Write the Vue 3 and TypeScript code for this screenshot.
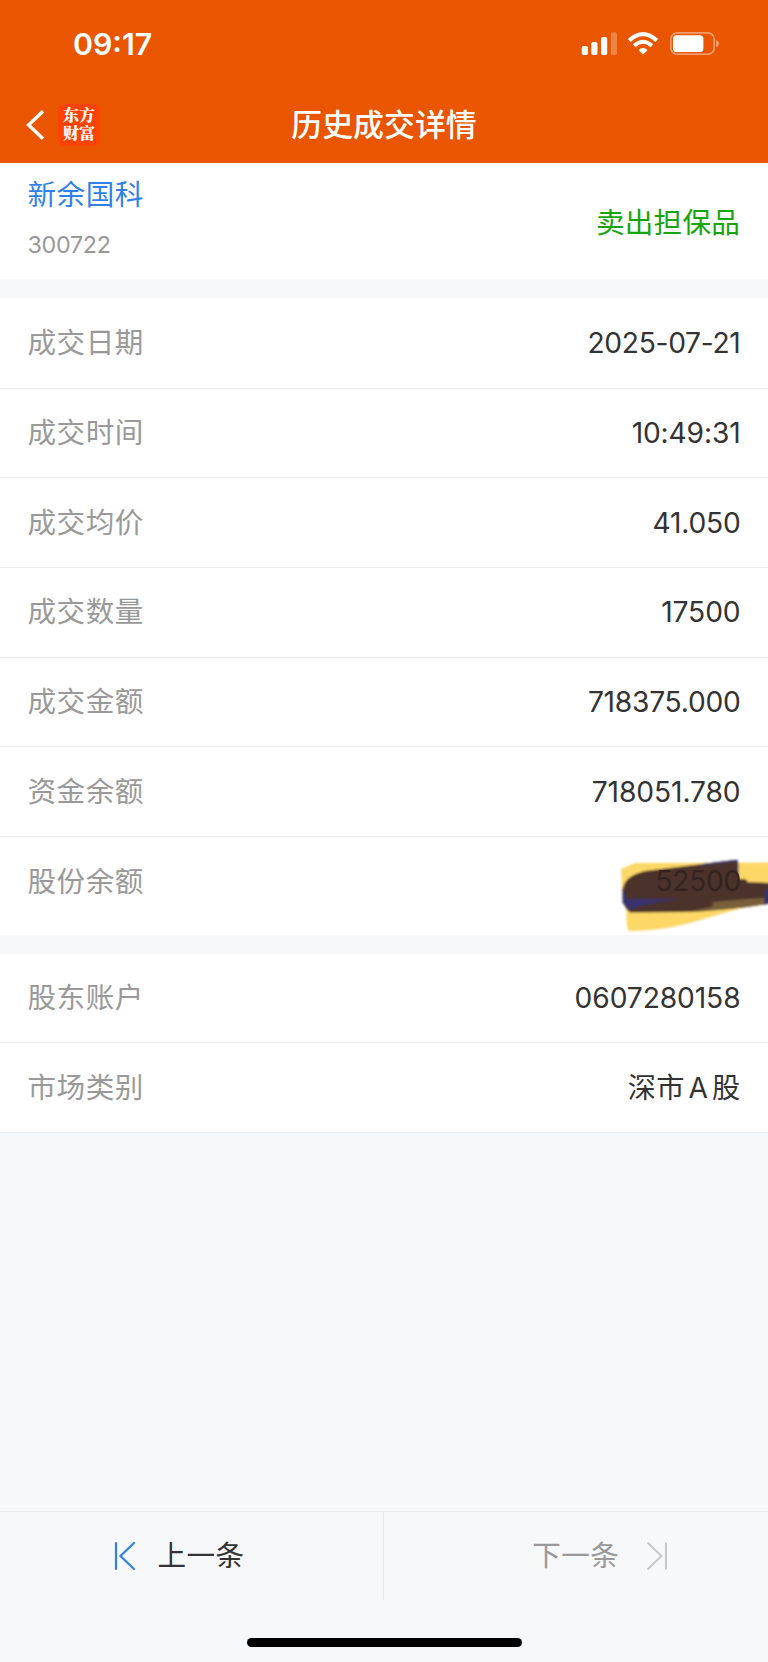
<script setup lang="ts">
interface DetailRow {
  label: string
  value: string
  spacing: number
  masked?: boolean
}

const tradeRows: DetailRow[] = [
  { label: '成交日期', value: '2025-07-21', spacing: -0.3 },
  { label: '成交时间', value: '10:49:31', spacing: -0.15 },
  { label: '成交均价', value: '41.050', spacing: -0.2 },
  { label: '成交数量', value: '17500', spacing: -0.1 },
  { label: '成交金额', value: '718375.000', spacing: -0.25 },
  { label: '资金余额', value: '718051.780', spacing: -0.1 },
  { label: '股份余额', value: '52500', spacing: -0.3, masked: true },
]

const accountRows: DetailRow[] = [
  { label: '股东账户', value: '0607280158', spacing: -0.1 },
  { label: '市场类别', value: '深市 A 股', spacing: 0.3 },
]
</script>

<template>
  <div class="screen">
    <header class="header">
      <div class="status">
        <span class="clock">09:17</span>
        <svg class="status-icons" width="140" height="26" viewBox="580 31 140 26">
          <g fill="#fff">
            <rect x="581.8" y="46" width="6.2" height="9" rx="1.8" />
            <rect x="591.3" y="42" width="6.2" height="13" rx="1.8" />
            <rect x="601" y="37" width="6.2" height="18" rx="1.8" />
            <rect x="610.8" y="32.3" width="6.2" height="22.7" rx="1.8" opacity=".27" />
            <path d="M643 54.6 L638.4 50 Q643 46 647.6 50 Z" />
          </g>
          <g fill="none" stroke="#fff" stroke-width="4">
            <path d="M629.2 40.4 Q643 27.8 656.8 40.4" />
            <path d="M634.2 45.7 Q643 37.8 651.8 45.7" />
          </g>
          <rect x="670.8" y="32.8" width="43.4" height="21.4" rx="6.5" fill="none" stroke="#fff" stroke-width="1.7" opacity=".42" />
          <rect x="673" y="35.2" width="30.4" height="16.8" rx="3.6" fill="#fff" />
          <path d="M716.2 40 q2.8 1 2.8 3.5 t-2.8 3.5 z" fill="#fff" opacity=".48" />
        </svg>
      </div>
      <div class="nav">
        <div class="nav-side">
          <svg class="back" width="20" height="34" viewBox="0 0 20 34">
            <path d="M18 3.200 L3.600 17 L18 30.800" fill="none" stroke="#fff" stroke-width="3.400" />
          </svg>
          <div class="logo"><span>东方</span><span>财富</span></div>
        </div>
        <h1 class="title">历史成交详情</h1>
        <div class="nav-side"></div>
      </div>
    </header>

    <section class="stock">
      <div>
        <div class="stock-name">新余国科</div>
        <div class="stock-code">300722</div>
      </div>
      <div class="direction">卖出担保品</div>
    </section>

    <section class="group trade">
      <div v-for="row in tradeRows" :key="row.label" class="row">
        <span class="label">{{ row.label }}</span>
        <span v-if="!row.masked" class="value" :style="{ letterSpacing: row.spacing + 'px' }">{{ row.value }}</span>
        <svg v-else class="scribble" width="148" height="76" viewBox="620 858 148 76">
          <defs>
            <filter id="soft" x="-5%" y="-5%" width="110%" height="110%">
              <feGaussianBlur stdDeviation="1" />
            </filter>
          </defs>
          <g filter="url(#soft)">
            <path d="M621 869 L635 863 L774 862.5 L774 899 Q720 914 690 923 Q660 931 629 931 Q626 929 626.5 911 L622 890 Z" fill="#fdd866" />
            <path d="M623 889 Q624 876 645 871 L735 860 Q738.500 860 738.500 865 L738.500 879 L745 879 Q747.500 880 747.500 882 L774 883 L774 903 Q725 911 690 912 L630 912.500 Q623 907 623 898 Z" fill="#4c332a" />
            <path d="M713 902 L747 899 L764 898 L764 904 Q735 910 690 910.500 L712 907 Z" fill="#79603a" />
            <path d="M622.500 887 L627 899 L682 899 Q645 903 630 910 L622.500 903 Z" fill="#37306d" />
            <path d="M765 890 L774 887 L774 904 L765 904 Z" fill="#37306d" />
            <path d="M700 865 L737 860.500 V876" fill="none" stroke="#37306d" stroke-width="1.500" />
          </g>
          <text x="655.500" y="891" class="covered">{{ row.value }}</text>
        </svg>
      </div>
    </section>

    <section class="group">
      <div v-for="row in accountRows" :key="row.label" class="row">
        <span class="label">{{ row.label }}</span>
        <span class="value" :style="{ letterSpacing: row.spacing + 'px' }">{{ row.value }}</span>
      </div>
    </section>

    <footer class="footer">
      <div class="pager">
        <button class="page prev">
          <svg width="24" height="32" viewBox="0 0 24 32" fill="none" stroke="#327fe8" stroke-width="2.200" stroke-linecap="round">
            <path d="M3 3 V29 M21 3 L7.500 16 L21 29" />
          </svg>
          <span>上一条</span>
        </button>
        <button class="page next">
          <span>下一条</span>
          <svg width="24" height="32" viewBox="0 0 24 32" fill="none" stroke="#c8c8ca" stroke-width="2" stroke-linecap="round">
            <path d="M21 3 V29 M3 3 L16.500 16 L3 29" />
          </svg>
        </button>
      </div>
      <div class="home-indicator"></div>
    </footer>
  </div>
</template>

<style>
body {
  margin: 0;
}
</style>

<style scoped>
.screen {
  width: 768px;
  height: 1662px;
  display: flex;
  flex-direction: column;
  overflow: hidden;
  background: #f7f8fa;
  color: #333;
  font-family: Inter, "Noto Sans CJK SC", sans-serif;
}
.header {
  height: 163px;
  flex: none;
  background: #ea5500;
  color: #fff;
}
.status {
  height: 87px;
  display: flex;
  justify-content: space-between;
  align-items: center;
  padding: 0 48px 0 73px;
  box-sizing: border-box;
}
.clock {
  font-size: 30.3px;
  font-weight: 600;
  line-height: 36px;
}
.nav {
  height: 75px;
  display: flex;
  align-items: center;
}
.nav-side {
  flex: 1;
  display: flex;
  align-items: center;
}
.back {
  margin-left: 24.5px;
}
.logo {
  width: 42px;
  height: 42px;
  margin-left: 13.5px;
  border-radius: 7px;
  background: #ff4205;
  display: flex;
  flex-direction: column;
  align-items: center;
  justify-content: center;
  font: 900 16px/18px "Noto Serif CJK SC", "Noto Sans CJK SC", serif;
}
.logo span {
  position: relative;
  top: -1px;
}
.title {
  margin: 0;
  font-size: 30.9px;
  font-weight: 500;
  line-height: 44px;
}
.stock {
  height: 116px;
  flex: none;
  display: flex;
  justify-content: space-between;
  padding: 0 28px 0 27.5px;
  background: #fff;
}
.stock-name {
  margin-top: 12px;
  font-size: 28.6px;
  letter-spacing: 0.5px;
  line-height: 40px;
  color: #327fe8;
}
.stock-code {
  margin-top: 14px;
  font-size: 23.3px;
  letter-spacing: -0.3px;
  line-height: 32px;
  color: #999;
}
.direction {
  margin-top: 40px;
  font-size: 28.6px;
  letter-spacing: 0.2px;
  line-height: 40px;
  color: #17a40c;
}
.group {
  margin-top: 18.5px;
  flex: none;
  background: #fff;
}
.trade {
  height: 637.5px;
  padding-top: 1.5px;
  box-sizing: border-box;
}
.row {
  position: relative;
  height: 89.7px;
  box-sizing: border-box;
  display: flex;
  justify-content: space-between;
  align-items: center;
  padding: 0 27.5px;
  border-bottom: 1px solid #ececee;
  font-size: 28.6px;
  line-height: 42px;
}
.trade .row:last-child {
  border-bottom: 0;
}
.label {
  color: #999;
  letter-spacing: 0.5px;
}
.value {
  font-size: 28.2px;
  word-spacing: -4.5px;
}
.scribble {
  position: absolute;
  right: 0;
  top: 21px;
}
.covered {
  font-size: 28.2px;
  letter-spacing: -0.3px;
  fill: #35231f;
}
.footer {
  margin-top: auto;
  height: 151px;
  flex: none;
  border-top: 1px solid #ebebed;
  box-sizing: border-box;
}
.pager {
  height: 88px;
  display: flex;
}
.page {
  width: 384px;
  box-sizing: border-box;
  display: flex;
  align-items: center;
  justify-content: center;
  padding: 0 0 1px;
  border: 0;
  background: none;
  font: 400 28.6px/42px Inter, "Noto Sans CJK SC", sans-serif;
  letter-spacing: 0.4px;
}
.prev {
  gap: 21px;
  padding-right: 26px;
  border-right: 1px solid #e9e9eb;
  color: #333;
}
.next {
  gap: 25.5px;
  padding-left: 49px;
  color: #999;
}
.home-indicator {
  width: 275px;
  height: 9px;
  margin: 38px auto 0;
  border-radius: 5px;
  background: #000;
}
</style>
